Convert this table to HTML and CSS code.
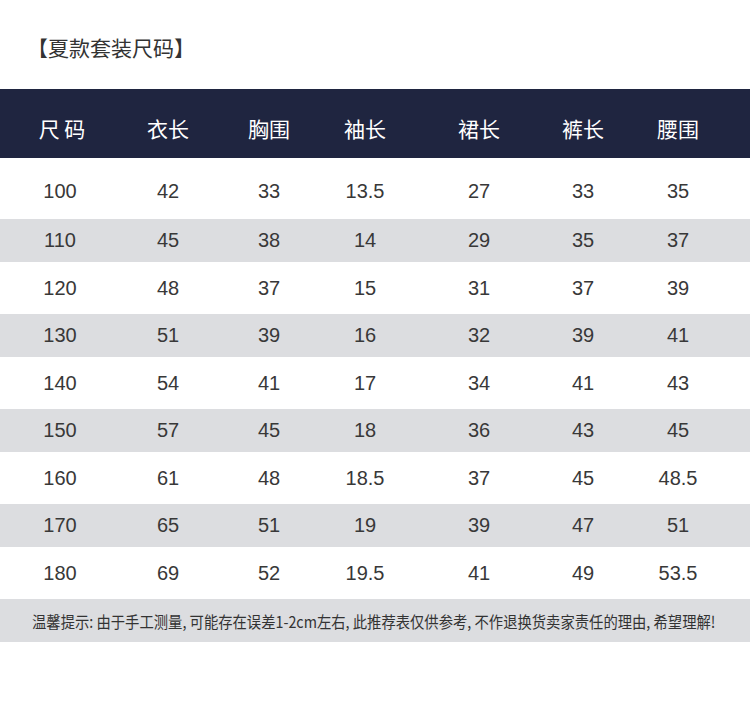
FILE: index.html
```html
<!DOCTYPE html>
<html lang="zh">
<head>
<meta charset="utf-8">
<title>夏款套装尺码</title>
<link rel="stylesheet" href="styles.css">
</head>
<body>
<div class="page">
  <h1 class="title">【夏款套装尺码】</h1>
  <div class="table">
    <div class="row head">
      <div>尺 码</div><div>衣长</div><div>胸围</div><div>袖长</div><div>裙长</div><div>裤长</div><div>腰围</div>
    </div>
    <div class="row first">
      <div>100</div><div>42</div><div>33</div><div>13.5</div><div>27</div><div>33</div><div>35</div>
    </div>
    <div class="row gray">
      <div>110</div><div>45</div><div>38</div><div>14</div><div>29</div><div>35</div><div>37</div>
    </div>
    <div class="row">
      <div>120</div><div>48</div><div>37</div><div>15</div><div>31</div><div>37</div><div>39</div>
    </div>
    <div class="row gray">
      <div>130</div><div>51</div><div>39</div><div>16</div><div>32</div><div>39</div><div>41</div>
    </div>
    <div class="row">
      <div>140</div><div>54</div><div>41</div><div>17</div><div>34</div><div>41</div><div>43</div>
    </div>
    <div class="row gray">
      <div>150</div><div>57</div><div>45</div><div>18</div><div>36</div><div>43</div><div>45</div>
    </div>
    <div class="row">
      <div>160</div><div>61</div><div>48</div><div>18.5</div><div>37</div><div>45</div><div>48.5</div>
    </div>
    <div class="row gray">
      <div>170</div><div>65</div><div>51</div><div>19</div><div>39</div><div>47</div><div>51</div>
    </div>
    <div class="row">
      <div>180</div><div>69</div><div>52</div><div>19.5</div><div>41</div><div>49</div><div>53.5</div>
    </div>
  </div>
  <div class="note"><span class="note-text">温馨提示: 由于手工测量, 可能存在误差1-2cm左右, 此推荐表仅供参考, 不作退换货卖家责任的理由, 希望理解!</span></div>
</div>
</body>
</html>
```

FILE: styles.css
```css
html, body {
  margin: 0;
  padding: 0;
  background: #ffffff;
}

.page {
  width: 750px;
  font-family: "Liberation Sans", "Noto Sans CJK SC", sans-serif;
  color: #333333;
}

.title {
  margin: 0;
  height: 89px;
  box-sizing: border-box;
  padding: 35px 0 0 27px;
  font-family: "Noto Sans CJK SC", sans-serif;
  font-size: 21px;
  line-height: 25px;
  font-weight: 400;
  color: #333333;
}

.table {
  display: flex;
  flex-direction: column;
}

.row {
  display: grid;
  grid-template-columns: 120px 96px 106px 86px 142px 66px 124px 1fr;
  align-items: center;
  height: 52px;
  font-size: 20px;
  color: #383838;
}

.row > div {
  text-align: center;
}

.row.head {
  height: 69px;
  box-sizing: border-box;
  padding-top: 8px;
  background: #1f2540;
  color: #ffffff;
  font-family: "Noto Sans CJK SC", sans-serif;
  font-size: 21px;
}

.row.head > div:first-child {
  padding-left: 4px;
}

.row.first {
  height: 61px;
  box-sizing: border-box;
  padding-top: 5px;
}

.row.gray {
  height: 43px;
  background: #dcdde0;
}

.note {
  height: 43px;
  box-sizing: border-box;
  padding-left: 32px;
  background: #dcdde0;
  display: flex;
  align-items: center;
  white-space: nowrap;
}

.note-text {
  display: inline-block;
  font-family: "Noto Sans CJK SC", sans-serif;
  font-size: 16px;
  line-height: 20px;
  color: #333333;
  transform: scaleX(0.895);
  transform-origin: left center;
}
```
